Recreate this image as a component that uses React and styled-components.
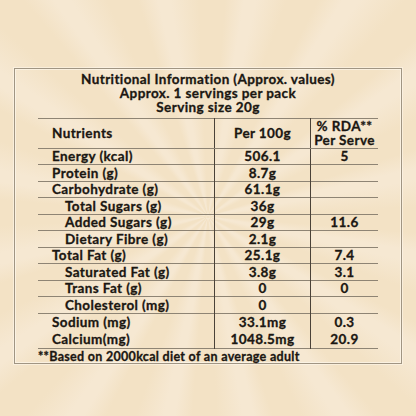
import styled, { createGlobalStyle } from "styled-components";

const rows = [
  { name: "Energy (kcal)", per100: "506.1", rda: "5" },
  { name: "Protein (g)", per100: "8.7g", rda: "" },
  { name: "Carbohydrate (g)", per100: "61.1g", rda: "" },
  { name: "Total Sugars (g)", per100: "36g", rda: "", sub: true },
  { name: "Added Sugars (g)", per100: "29g", rda: "11.6", sub: true },
  { name: "Dietary Fibre (g)", per100: "2.1g", rda: "", sub: true },
  { name: "Total Fat (g)", per100: "25.1g", rda: "7.4" },
  { name: "Saturated Fat (g)", per100: "3.8g", rda: "3.1", sub: true },
  { name: "Trans Fat (g)", per100: "0", rda: "0", sub: true },
  { name: "Cholesterol (mg)", per100: "0", rda: "", sub: true },
  { name: "Sodium (mg)", per100: "33.1mg", rda: "0.3" },
  { name: "Calcium(mg)", per100: "1048.5mg", rda: "20.9", tall: true },
];

const App = () => {
  return (
    <Page>
      <GlobalStyle />
      <Card>
        <Title>
          <div>Nutritional Information (Approx. values)</div>
          <div>Approx. 1 servings per pack</div>
          <div>Serving size 20g</div>
        </Title>
        <Table>
          <thead>
            <tr>
              <HeadCell>Nutrients</HeadCell>
              <HeadCell $center>Per 100g</HeadCell>
              <HeadCell $center>
                % RDA**
                <br />
                Per Serve
              </HeadCell>
            </tr>
          </thead>
          <tbody>
            {rows.map((row) => (
              <Row key={row.name} $tall={row.tall}>
                <NameCell $sub={row.sub}>{row.name}</NameCell>
                <ValueCell>{row.per100}</ValueCell>
                <ValueCell>{row.rda}</ValueCell>
              </Row>
            ))}
          </tbody>
        </Table>
        <Footnote>**Based on 2000kcal diet of an average adult</Footnote>
      </Card>
    </Page>
  );
};

const GlobalStyle = createGlobalStyle`
  html, body {
    margin: 0;
    padding: 0;
  }
  body {
    font-family: "Lato", "Noto Sans", sans-serif;
    color: #1b1712;
    -webkit-text-stroke: 0.3px #1b1712;
  }
`;

const Page = styled.div`
  width: 416px;
  height: 416px;
  box-sizing: border-box;
  padding: 68px 14px 0;
  overflow: hidden;
  background:
    repeating-conic-gradient(
      from 20deg at 50% 52%,
      #f3e2c5 0deg,
      #f3e2c5 7deg,
      #f6e8d2 12deg,
      #f6e8d2 15deg,
      #f3e2c5 22.5deg
    );
`;

const Card = styled.div`
  width: 388px;
  height: 296px;
  box-sizing: border-box;
  border: 1.5px solid #a09583;
  box-shadow: inset 0 0 0 1px rgba(255, 250, 240, 0.6),
    0 0 0 1px rgba(255, 250, 240, 0.5);
  padding: 3px 23px 0;
`;

const Title = styled.div`
  text-align: center;
  font-weight: 700;
  font-size: 13.5px;
  line-height: 14px;
  letter-spacing: 0.4px;
  padding-bottom: 4px;
`;

const Table = styled.table`
  width: 100%;
  border-collapse: collapse;
  table-layout: fixed;
  font-weight: 700;
  font-size: 13.5px;
  letter-spacing: 0.4px;
  border-top: 1.5px solid #8e8474;
  border-bottom: 1.5px solid #8e8474;

  td,
  th {
    padding: 0;
    border-left: 1px solid #4a4238;
  }
  td:first-child,
  th:first-child {
    border-left: none;
  }
  th:nth-child(1),
  td:nth-child(1) {
    width: 162px;
  }
  th:nth-child(2),
  td:nth-child(2) {
    width: 95px;
  }
`;

const HeadCell = styled.th`
  height: 28.5px;
  font-weight: 700;
  line-height: 14px;
  text-align: ${(p) => (p.$center ? "center" : "left")};
  padding-left: ${(p) => (p.$center ? "0" : "14px")} !important;
  border-bottom: 1.5px solid #8e8474;
  vertical-align: middle;
`;

const Row = styled.tr`
  height: ${(p) => (p.$tall ? "18.5px" : "16.5px")};
  line-height: 14px;

  & + & td {
    border-top: 1.5px solid #8e8474;
  }
`;

const NameCell = styled.td`
  padding-left: ${(p) => (p.$sub ? "27px" : "14px")} !important;
  white-space: nowrap;
`;

const ValueCell = styled.td`
  text-align: center;
`;

const Footnote = styled.div`
  font-weight: 700;
  font-size: 12.5px;
  letter-spacing: 0.3px;
  line-height: 16px;
`;

export default App;
